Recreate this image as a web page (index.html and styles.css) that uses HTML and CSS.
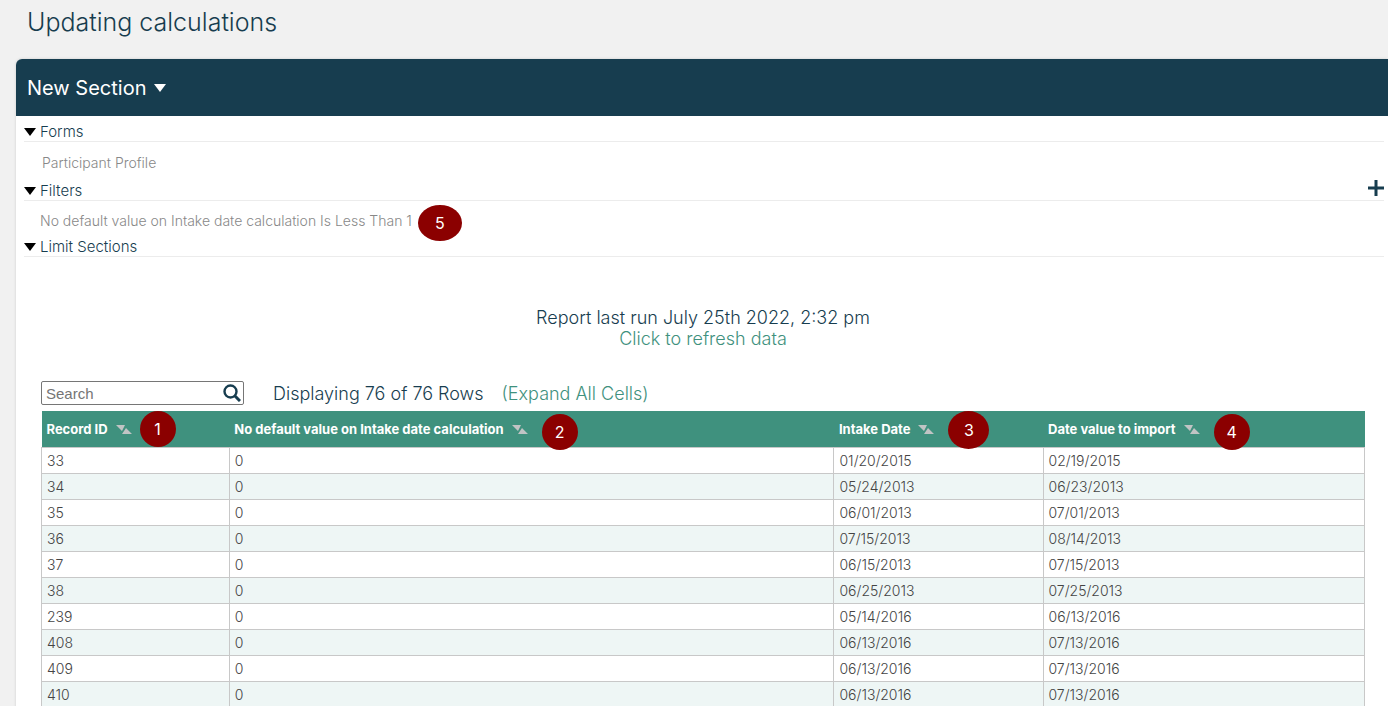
FILE: index.html
```html
<!DOCTYPE html>
<html lang="en">
<head>
    <meta charset="UTF-8">
    <meta name="viewport" content="width=device-width, initial-scale=1.0">
    <title>Updating calculations</title>
    <link rel="stylesheet" href="styles.css">
</head>
<body>

    <h1>Updating calculations</h1>

    <main class="panel">
        <header class="panel-header">
            <button class="section-btn" type="button">New Section <span class="caret"></span></button>
        </header>

        <div class="settings">
            <details open>
                <summary><span class="arrow"></span>Forms</summary>
                <p class="setting form-setting">Participant Profile</p>
            </details>
            <details open>
                <summary>
                    <span class="arrow"></span>Filters
                    <button class="add-btn" type="button" aria-label="Add filter">
                        <svg width="16" height="16" viewBox="0 0 16 16"><path d="M8 0v16M0 8h16" stroke="#173d4f" stroke-width="3"/></svg>
                    </button>
                </summary>
                <p class="setting"><span class="anchor">No default value on Intake date calculation Is Less Than 1<span class="badge badge-filter">5</span></span></p>
            </details>
            <details open>
                <summary><span class="arrow"></span>Limit Sections</summary>
            </details>
        </div>

        <div class="report">
            <div class="last-run">
                <p>Report last run July 25th 2022, 2:32 pm</p>
                <a href="#">Click to refresh data</a>
            </div>

            <div class="toolbar">
                <div class="search">
                    <input type="text" id="search" placeholder="Search" aria-label="Search">
                    <svg class="search-icon" width="18" height="18" viewBox="0 0 18 18"><circle cx="7.5" cy="7.5" r="6" fill="none" stroke="#173d4f" stroke-width="2.4"/><path d="M12 12l5 5" stroke="#173d4f" stroke-width="3"/></svg>
                </div>
                <span class="count">Displaying 76 of 76 Rows</span>
                <a href="#">(Expand All Cells)</a>
            </div>

            <table>
                <colgroup>
                    <col class="col-id">
                    <col class="col-calc">
                    <col class="col-intake">
                    <col>
                </colgroup>
                <thead>
                    <tr>
                        <th><span class="anchor">Record ID<svg class="sort" width="16" height="9" viewBox="0 0 16 9"><path d="M0 0h9L6 6zM6 9h10l-6-6z"/></svg><span class="badge">1</span></span></th>
                        <th><span class="anchor">No default value on Intake date calculation<svg class="sort" width="16" height="9" viewBox="0 0 16 9"><path d="M0 0h9L6 6zM6 9h10l-6-6z"/></svg><span class="badge badge-low">2</span></span></th>
                        <th><span class="anchor">Intake Date<svg class="sort" width="16" height="9" viewBox="0 0 16 9"><path d="M0 0h9L6 6zM6 9h10l-6-6z"/></svg><span class="badge badge-wide">3</span></span></th>
                        <th><span class="anchor">Date value to import<svg class="sort" width="16" height="9" viewBox="0 0 16 9"><path d="M0 0h9L6 6zM6 9h10l-6-6z"/></svg><span class="badge badge-low">4</span></span></th>
                    </tr>
                </thead>
                <tbody>
                    <tr><td>33</td><td>0</td><td>01/20/2015</td><td>02/19/2015</td></tr>
                    <tr><td>34</td><td>0</td><td>05/24/2013</td><td>06/23/2013</td></tr>
                    <tr><td>35</td><td>0</td><td>06/01/2013</td><td>07/01/2013</td></tr>
                    <tr><td>36</td><td>0</td><td>07/15/2013</td><td>08/14/2013</td></tr>
                    <tr><td>37</td><td>0</td><td>06/15/2013</td><td>07/15/2013</td></tr>
                    <tr><td>38</td><td>0</td><td>06/25/2013</td><td>07/25/2013</td></tr>
                    <tr><td>239</td><td>0</td><td>05/14/2016</td><td>06/13/2016</td></tr>
                    <tr><td>408</td><td>0</td><td>06/13/2016</td><td>07/13/2016</td></tr>
                    <tr><td>409</td><td>0</td><td>06/13/2016</td><td>07/13/2016</td></tr>
                    <tr><td>410</td><td>0</td><td>06/13/2016</td><td>07/13/2016</td></tr>
                </tbody>
            </table>
        </div>
    </main>

</body>
</html>
```
FILE: styles.css
```css
body {
    font-family: Inter, "Liberation Sans", sans-serif;
    font-weight: 300;
    font-size: 14px;
    color: #173d4f;
    background-color: #f1f1f1;
    margin: 0;
}

h1 {
    font-size: 25px;
    font-weight: 300;
    line-height: 30px;
    margin: 0;
    padding: 7px 27px 22px;
}

p {
    margin: 0;
}

a {
    color: #3f917e;
    text-decoration: none;
}

button {
    font-family: inherit;
    background: none;
    border: none;
    padding: 0;
    cursor: pointer;
}

.panel {
    background: white;
    margin-left: 16px;
    border-radius: 6px 0 0 0;
    box-shadow: 0 0 3px rgba(0, 0, 0, 0.15);
}

.panel-header {
    display: flex;
    align-items: center;
    height: 57px;
    padding-left: 11px;
    background: #173d4f;
    border-radius: 6px 0 0 0;
}

.section-btn {
    display: flex;
    align-items: center;
    gap: 8px;
    color: white;
    font-size: 20px;
    font-weight: 400;
}

.caret {
    border: 6px solid transparent;
    border-top: 8px solid white;
    border-bottom: none;
}

.settings {
    padding: 6px 4px 0 8px;
}

summary {
    display: flex;
    align-items: center;
    height: 19px;
    border-bottom: 1px solid #ececec;
    font-size: 15px;
    list-style: none;
    cursor: pointer;
}

.arrow {
    border: 6px solid transparent;
    border-top: 8px solid black;
    border-bottom: none;
    margin-right: 4px;
}

.add-btn {
    display: flex;
    margin-left: auto;
    padding-bottom: 6px;
}

.setting {
    line-height: 20px;
    padding: 10px 16px 6px;
    color: #888;
}

.form-setting {
    padding: 11px 18px 8px;
}

.anchor {
    position: relative;
}

/* numbered callouts that sit over the report */
.badge {
    position: absolute;
    left: 100%;
    top: 50%;
    width: 36px;
    height: 36px;
    margin: -18px 0 0 8px;
    border-radius: 50%;
    background: #8b0000;
    color: white;
    font-size: 16px;
    font-weight: 400;
    line-height: 36px;
    text-align: center;
}

.badge-low {
    margin: -15px 0 0 14px;
}

.badge-wide {
    width: 41px;
    height: 38px;
    margin-left: 14px;
    line-height: 38px;
}

.badge-filter {
    width: 44px;
    margin: -16px 0 0 6px;
}

.report {
    padding: 50px 23px 0 25px;
}

.last-run {
    font-size: 18px;
    line-height: 21px;
    text-align: center;
}

.toolbar {
    display: flex;
    align-items: center;
    height: 24px;
    margin: 32px 0 6px;
    font-size: 18px;
}

.search {
    position: relative;
    width: 203px;
    margin-right: 29px;
}

.search input {
    box-sizing: border-box;
    width: 100%;
    height: 24px;
    padding: 0 24px 0 4px;
    border: 1px solid #767676;
    border-radius: 2px;
    font-family: "Liberation Sans", sans-serif;
    font-size: 15px;
}

.search-icon {
    position: absolute;
    right: 3px;
    top: 3px;
}

.count {
    margin-right: 18px;
}

table {
    width: 100%;
    table-layout: fixed;
    border-collapse: collapse;
}

.col-id {
    width: 14.2%;
}

.col-calc {
    width: 45.7%;
}

.col-intake {
    width: 15.8%;
}

th {
    height: 36px;
    padding: 0 5px;
    background: #3f917e;
    color: white;
    font-size: 13px;
    font-weight: 700;
    text-align: left;
}

.sort {
    margin-left: 8px;
    fill: #c0c4c4;
}

td {
    height: 25px;
    padding: 0 5px;
    border: 1px solid #c8c8c8;
    color: #444;
}

tbody tr:nth-child(even) {
    background: #eef6f5;
}
```
